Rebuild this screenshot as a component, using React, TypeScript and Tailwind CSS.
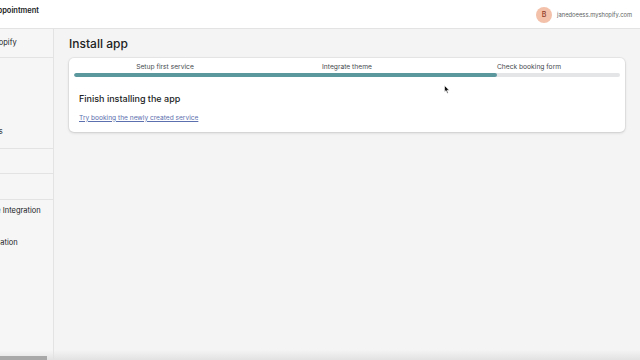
import React from "react";

const steps = ["Setup first service", "Integrate theme", "Check booking form"];

const SideItem = ({ label, offset }: { label: string; offset: string }) => (
    <div className={`h-[22px] flex items-center whitespace-nowrap text-[7.5px] text-[#202223] ${offset}`}>
        {label}
    </div>
);

export default function App() {
    const progress = 77.5;

    return (
        <div className="relative w-[640px] h-[360px] overflow-hidden bg-[#f4f4f4] font-['Inter',sans-serif]">
            {/* Top bar */}
            <header className="h-[29px] bg-white border-b border-[#e3e3e3] flex items-start justify-between">
                <div className="pt-[5px] -ml-[8px] text-[7.5px] font-semibold text-[#202223] whitespace-nowrap">
                    Appointment
                </div>
                <div className="flex items-center gap-x-[5px] pt-[7px] pr-[8px]">
                    <div className="w-[16px] h-[16px] rounded-full bg-[#f3c1aa] flex items-center justify-center text-[7px] font-medium text-[#8d3b28]">
                        B
                    </div>
                    <span className="text-[5.8px] text-[#5c5f62]">janedoeess.myshopify.com</span>
                </div>
            </header>

            <div className="flex h-[331px]">
                {/* Side navigation */}
                <nav className="w-[54px] shrink-0 border-r border-[#e3e3e3] bg-[#f6f6f7] overflow-hidden">
                    <div className="h-[29px] border-b border-[#e3e3e3] pt-[3px]">
                        <SideItem label="View on Shopify" offset="-ml-[41px]" />
                    </div>
                    <div className="h-[91px] border-b border-[#e3e3e3] flex flex-col justify-end pb-[5px]">
                        <SideItem label="Services" offset="-ml-[28px]" />
                    </div>
                    <div className="h-[25px] border-b border-[#e3e3e3]" />
                    <div className="h-[26px] border-b border-[#e3e3e3]" />
                    <div>
                        <SideItem label="Theme Integration" offset="-ml-[24px]" />
                        <div className="h-[10px]" />
                        <SideItem label="Notification" offset="-ml-[23px]" />
                    </div>
                </nav>

                {/* Main content */}
                <main className="flex-1 pl-[15px] pr-[15px] pt-[7px]">
                    <h1 className="text-[12px] font-medium text-[#202223] leading-[16px]">Install app</h1>

                    <div className="mt-[6px] bg-white rounded-[5px] shadow-[0_0_0_1px_rgba(63,63,68,0.06),0_1px_3px_rgba(63,63,68,0.18)] px-[5px] pt-[5px] pb-[9px]">
                        <div className="grid grid-cols-3 text-[6.7px] text-[#454a4e] leading-[9px]">
                            {steps.map((s) => (
                                <div key={s} className="text-center">{s}</div>
                            ))}
                        </div>
                        <div className="mt-[1px] h-[4px] rounded-full bg-[#e4e5e7] overflow-hidden">
                            <div className="h-full rounded-full bg-[#5a989e]" style={{ width: `${progress}%` }} />
                        </div>

                        <div className="px-[5px] pt-[15px]">
                            <p className="text-[9px] font-medium text-[#202223]">Finish installing the app</p>
                            <a href="#" className="block mt-[8px] text-[6.6px] text-[#5c6fae] underline">
                                Try booking the newly created service
                            </a>
                        </div>
                    </div>
                </main>
            </div>

            {/* Cursor */}
            <svg className="absolute left-[444px] top-[85px]" width="6" height="9" viewBox="0 0 6 9">
                <path d="M0.5 0.5 L0.5 7 L2 5.6 L3.2 8.3 L4.2 7.9 L3.1 5.2 L5.3 5.2 Z" fill="#111" stroke="#fff" strokeWidth="0.6" />
            </svg>

            {/* Bottom fade and scrollbar */}
            <div className="absolute left-0 right-0 bottom-0 h-[10px] bg-gradient-to-b from-transparent to-[#e2e2e2]" />
            <div className="absolute left-0 bottom-0 w-[47px] h-[4px] bg-[#a8a8a8]" />
        </div>
    );
}
